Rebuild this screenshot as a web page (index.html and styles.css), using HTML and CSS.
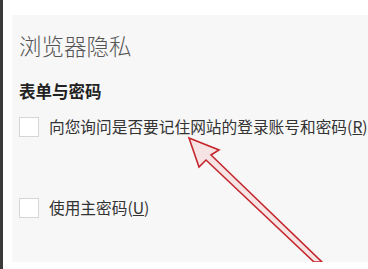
FILE: index.html
```html
<!DOCTYPE html>
<html lang="zh-CN">
<head>
    <meta charset="UTF-8">
    <title>浏览器隐私</title>
    <link rel="stylesheet" href="styles.css">
</head>
<body>
    <div id="frame">
        <div id="panel">
            <div class="title">浏览器隐私</div>
            <div class="section">表单与密码</div>
            <label class="check">
                <span class="box"></span>
                <span>向您询问是否要记住网站的登录账号和密码(<u>R</u>)</span>
            </label>
            <label class="check second">
                <span class="box"></span>
                <span>使用主密码(<u>U</u>)</span>
            </label>
            <!-- red arrow drawn over the screenshot -->
            <svg class="arrow" width="368" height="269" viewBox="0 0 368 269">
                <polygon points="189,138 219,150 211,155 322,262 314,262 206,160 199,167"
                         fill="#f6e4e4" stroke="#c4262c" stroke-width="1.6" stroke-linejoin="miter"/>
            </svg>
        </div>
    </div>
</body>
</html>
```

FILE: styles.css
```css
body {
    margin: 0;
    background-color: #fff;
    font-family: 'Noto Sans CJK SC', 'Liberation Sans', sans-serif;
}

#frame {
    height: 269px;
    border-left: 3px solid #3a3a3a;
    padding: 15px 0 7px 9px;
    box-sizing: border-box;
}

#panel {
    position: relative;
    height: 100%;
    background-color: #f7f7f7;
    padding-left: 7px;
    overflow: hidden;
}

.title {
    padding-top: 17px;
    font-size: 22.5px;
    line-height: 26px;
    font-weight: 300;
    color: #555;
}

.section {
    margin-top: 23px;
    font-size: 16.5px;
    line-height: 20px;
    font-weight: bold;
    color: #222;
}

.check {
    display: flex;
    align-items: center;
    gap: 10px;
    margin-top: 16px;
    font-size: 15.7px;
    line-height: 20px;
    color: #333;
    white-space: nowrap;
}

.check.second {
    margin-top: 61px;
}

.box {
    width: 18px;
    height: 18px;
    flex: none;
    background-color: #fff;
    border: 1px solid #d6d6d6;
}

.arrow {
    position: absolute;
    left: -12px;
    top: -15px;
}
```
